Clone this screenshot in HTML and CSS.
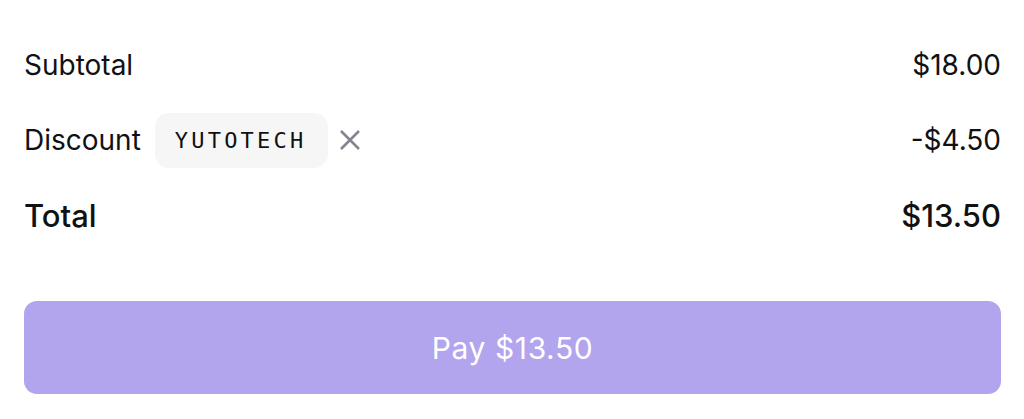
FILE: index.html
```html
<!DOCTYPE html>
<html lang="en">
<head>
<meta charset="utf-8">
<link rel="stylesheet" href="styles.css">
</head>
<body>
<div class="summary">
  <div class="rows">
    <div class="row">
      <span class="label">Subtotal</span>
      <span class="amount">$18.00</span>
    </div>
    <div class="row">
      <div class="discount">
        <span class="label">Discount</span>
        <span class="chip">YUTOTECH</span>
        <button class="remove" aria-label="Remove discount">
          <svg width="24" height="24" viewBox="0 0 24 24"><path d="M3 3L21 21M21 3L3 21" stroke="#85838f" stroke-width="2.6" stroke-linecap="butt" fill="none"/></svg>
        </button>
      </div>
      <span class="amount">-$4.50</span>
    </div>
    <div class="row total">
      <span class="label">Total</span>
      <span class="amount">$13.50</span>
    </div>
  </div>
  <button class="pay">Pay $13.50</button>
</div>
</body>
</html>
```
FILE: styles.css
```css
* { box-sizing: border-box; }
html, body { margin: 0; background: #fff; }
body {
  font-family: Inter, "Noto Sans", sans-serif;
  color: #111;
}
.summary {
  padding: 38px 23px 0 24px;
  display: flex;
  flex-direction: column;
  gap: 59px;
}
.rows {
  display: flex;
  flex-direction: column;
  gap: 21px;
}
.row {
  height: 54px;
  display: flex;
  align-items: center;
  justify-content: space-between;
  font-size: 28px;
}
.discount {
  display: flex;
  align-items: center;
}
.chip {
  margin-left: 14px;
  height: 55px;
  padding: 0 22px 0 20px;
  display: flex;
  align-items: center;
  background: #f6f6f6;
  border-radius: 14px;
  font-family: "DejaVu Sans Mono", "Liberation Mono", monospace;
  font-size: 22px;
  letter-spacing: 3.2px;
  color: #111;
}
.remove {
  margin-left: 10px;
  padding: 0;
  border: 0;
  background: none;
  width: 24px;
  height: 24px;
  display: flex;
}
.total { font-size: 31px; font-weight: 500; }
.pay {
  height: 93px;
  width: 100%;
  border: 0;
  border-radius: 13px;
  background: #b2a4ed;
  color: #fff;
  font-family: Inter, "Noto Sans", sans-serif;
  font-size: 30px;
  letter-spacing: 0.6px;
}
```
